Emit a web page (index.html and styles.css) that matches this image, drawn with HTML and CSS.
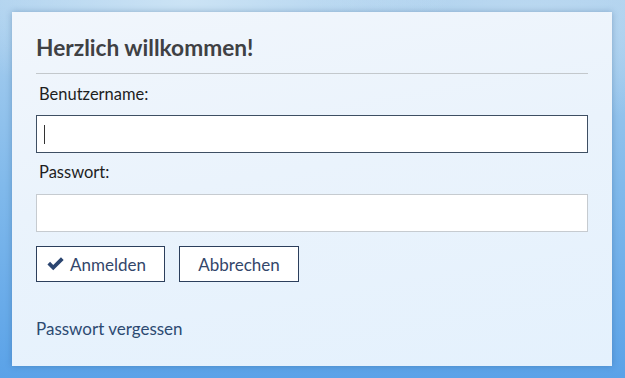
FILE: index.html
```html
<!DOCTYPE html>
<html lang="de">
<head>
<meta charset="utf-8">
<title>Anmelden</title>
<link rel="stylesheet" href="styles.css">
</head>
<body>
<div class="backdrop">
  <form class="card">
    <h1 class="title">Herzlich willkommen!</h1>
    <div class="rule"></div>
    <label class="label" for="user">Benutzername:</label>
    <div class="input focused" id="user"><span class="caret"></span></div>
    <label class="label label-pw" for="pw">Passwort:</label>
    <div class="input" id="pw"></div>
    <div class="actions">
      <button type="button" class="btn btn-primary">
        <svg class="check" width="20" height="16" viewBox="0 0 20 16"><path d="M1.5 8.5 L4.3 5.7 L7.6 9 L15.7 0.9 L18.5 3.7 L7.6 14.6 Z" fill="#2b4570"/></svg>
        Anmelden
      </button>
      <button type="button" class="btn">Abbrechen</button>
    </div>
    <a class="forgot" href="#">Passwort vergessen</a>
  </form>
</div>
</body>
</html>
```
FILE: styles.css
```css
html, body {
  margin: 0;
  padding: 0;
  height: 100%;
}
body {
  font-family: Lato, "Open Sans", sans-serif;
  background:
    radial-gradient(ellipse 60% 40% at 30% 0%, rgba(205,228,245,0.95), rgba(205,228,245,0) 70%),
    radial-gradient(ellipse 50% 40% at 85% 5%, rgba(190,218,241,0.85), rgba(190,218,241,0) 70%),
    linear-gradient(180deg, #acd0ee 0%, #80b9eb 50%, #5aa2e8 100%);
  overflow: hidden;
}
.backdrop {
  padding: 12px 13px 12px 12px;
  height: 100%;
  box-sizing: border-box;
}
.card {
  box-sizing: border-box;
  width: 600px;
  height: 354px;
  padding: 22px 24px 0 24px;
  background: linear-gradient(170deg, #f1f6fc 0%, #eaf3fc 45%, #e4f1fd 100%);
  box-shadow: 0 0 6px rgba(40, 80, 130, 0.35);
  display: flex;
  flex-direction: column;
}
.title {
  margin: 0;
  font-size: 22.7px;
  line-height: 27px;
  font-weight: 700;
  color: #3f4144;
}
.rule {
  height: 1px;
  background: #c3c8cc;
  margin-top: 12px;
}
.label {
  display: block;
  font-size: 16.5px;
  line-height: 19px;
  color: #1e1e1e;
  padding-left: 3px;
  margin-top: 11px;
}
.label-pw {
  margin-top: 10px;
}
.input {
  box-sizing: border-box;
  height: 38px;
  background: #ffffff;
  border: 1px solid #c6cbd0;
  margin-top: 11px;
  display: flex;
  align-items: center;
  padding-left: 7px;
}
#pw {
  margin-top: 12px;
}
.input.focused {
  border-color: #3e4f63;
}
.caret {
  width: 1px;
  height: 19px;
  background: #333;
}
.actions {
  display: flex;
  gap: 14px;
  margin-top: 14px;
}
.btn {
  box-sizing: border-box;
  height: 36px;
  padding: 0 18px;
  background: #ffffff;
  border: 1px solid #2c3f5c;
  border-radius: 0;
  font-family: Lato, "Open Sans", sans-serif;
  font-size: 17px;
  color: #33466a;
  display: flex;
  align-items: center;
  gap: 5px;
}
.btn-primary {
  width: 129px;
  padding-left: 9px;
}
.btn:not(.btn-primary) {
  width: 120px;
  justify-content: center;
}
.check {
  display: block;
}
.forgot {
  margin-top: 37px;
  font-size: 17px;
  line-height: 19px;
  color: #2d4a72;
  text-decoration: none;
  align-self: flex-start;
}
```
